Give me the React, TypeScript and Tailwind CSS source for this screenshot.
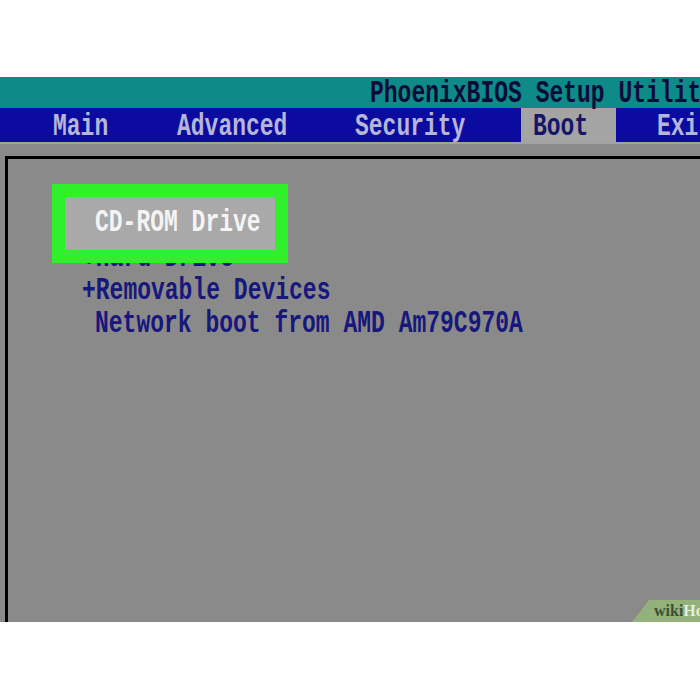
const tabs = [
  { label: 'Main', w: 'w-[124px]' },
  { label: 'Advanced', w: 'w-[178px]' },
  { label: 'Security', w: 'w-[178px]' },
  { label: 'Boot', w: 'w-[124px]', active: true },
  { label: 'Exit', w: 'w-[124px]' },
];

const bios = "font-['Liberation_Mono',monospace] font-bold text-[23px] leading-none";

function Tall({ children }: { children: React.ReactNode }) {
  return <span className="inline-block scale-y-[1.35] whitespace-pre">{children}</span>;
}

export default function App() {
  return (
    <div className={`w-[700px] h-[700px] bg-white overflow-hidden ${bios}`}>
      <div className="h-[77px]" />

      {/* title bar */}
      <div className="h-[31px] bg-[#0e8a89] flex items-center pt-1 pl-[370px] text-[#0b0b38] whitespace-nowrap">
        <Tall>PhoenixBIOS Setup Utility</Tall>
      </div>

      {/* menu tabs */}
      <div className="h-[34px] bg-[#0b0ba0] flex pl-[41px] whitespace-nowrap">
        {tabs.map((t) => (
          <div key={t.label} className={`${t.w} shrink-0 h-full`}>
            <div
              className={`h-full flex items-center pt-1 pl-3 ${
                t.active ? 'w-[95px] bg-[#a4a4a4] text-[#15156a]' : 'text-[#b6b6d6]'
              }`}
            >
              <Tall>{t.label}</Tall>
            </div>
          </div>
        ))}
      </div>

      {/* boot page */}
      <div className="relative h-[480px] bg-[#8a8a8a] border-t-2 border-[#a2a2a2] overflow-hidden">
        <div className="ml-[5px] mt-[12px] h-full border-l-[3px] border-t-[3px] border-black text-[#17177c]">
          <div className="pt-[50px] pl-[74px] flex flex-col">
            <div className="h-[33px]" />
            <div className="h-[33px] flex items-center">
              <Tall>+Hard Drive</Tall>
            </div>
            <div className="h-[33px] flex items-center">
              <Tall>+Removable Devices</Tall>
            </div>
            <div className="h-[33px] flex items-center pl-[13px]">
              <Tall>Network boot from AMD Am79C970A</Tall>
            </div>
          </div>
        </div>

        {/* selected entry with its frame */}
        <div className="absolute left-[52px] top-[40px] w-[236px] h-[79px] border-[13px] border-[#2ff02b] bg-[#a9a9a9]">
          <div className="h-full flex items-center pl-[30px] text-[#f4f4f4]">
            <Tall>CD-ROM Drive</Tall>
          </div>
        </div>

        {/* watermark tab */}
        <div className="absolute right-0 bottom-0 h-[22px] w-[68px] bg-[#93b17a] [clip-path:polygon(25%_0,100%_0,100%_100%,0_100%)] flex items-center pl-[22px] font-['Liberation_Serif',serif] text-[16px] font-bold">
          <span className="text-[#3d4f33]">wiki</span>
          <span className="text-[#e8eedf]">How</span>
        </div>
      </div>
    </div>
  );
}
